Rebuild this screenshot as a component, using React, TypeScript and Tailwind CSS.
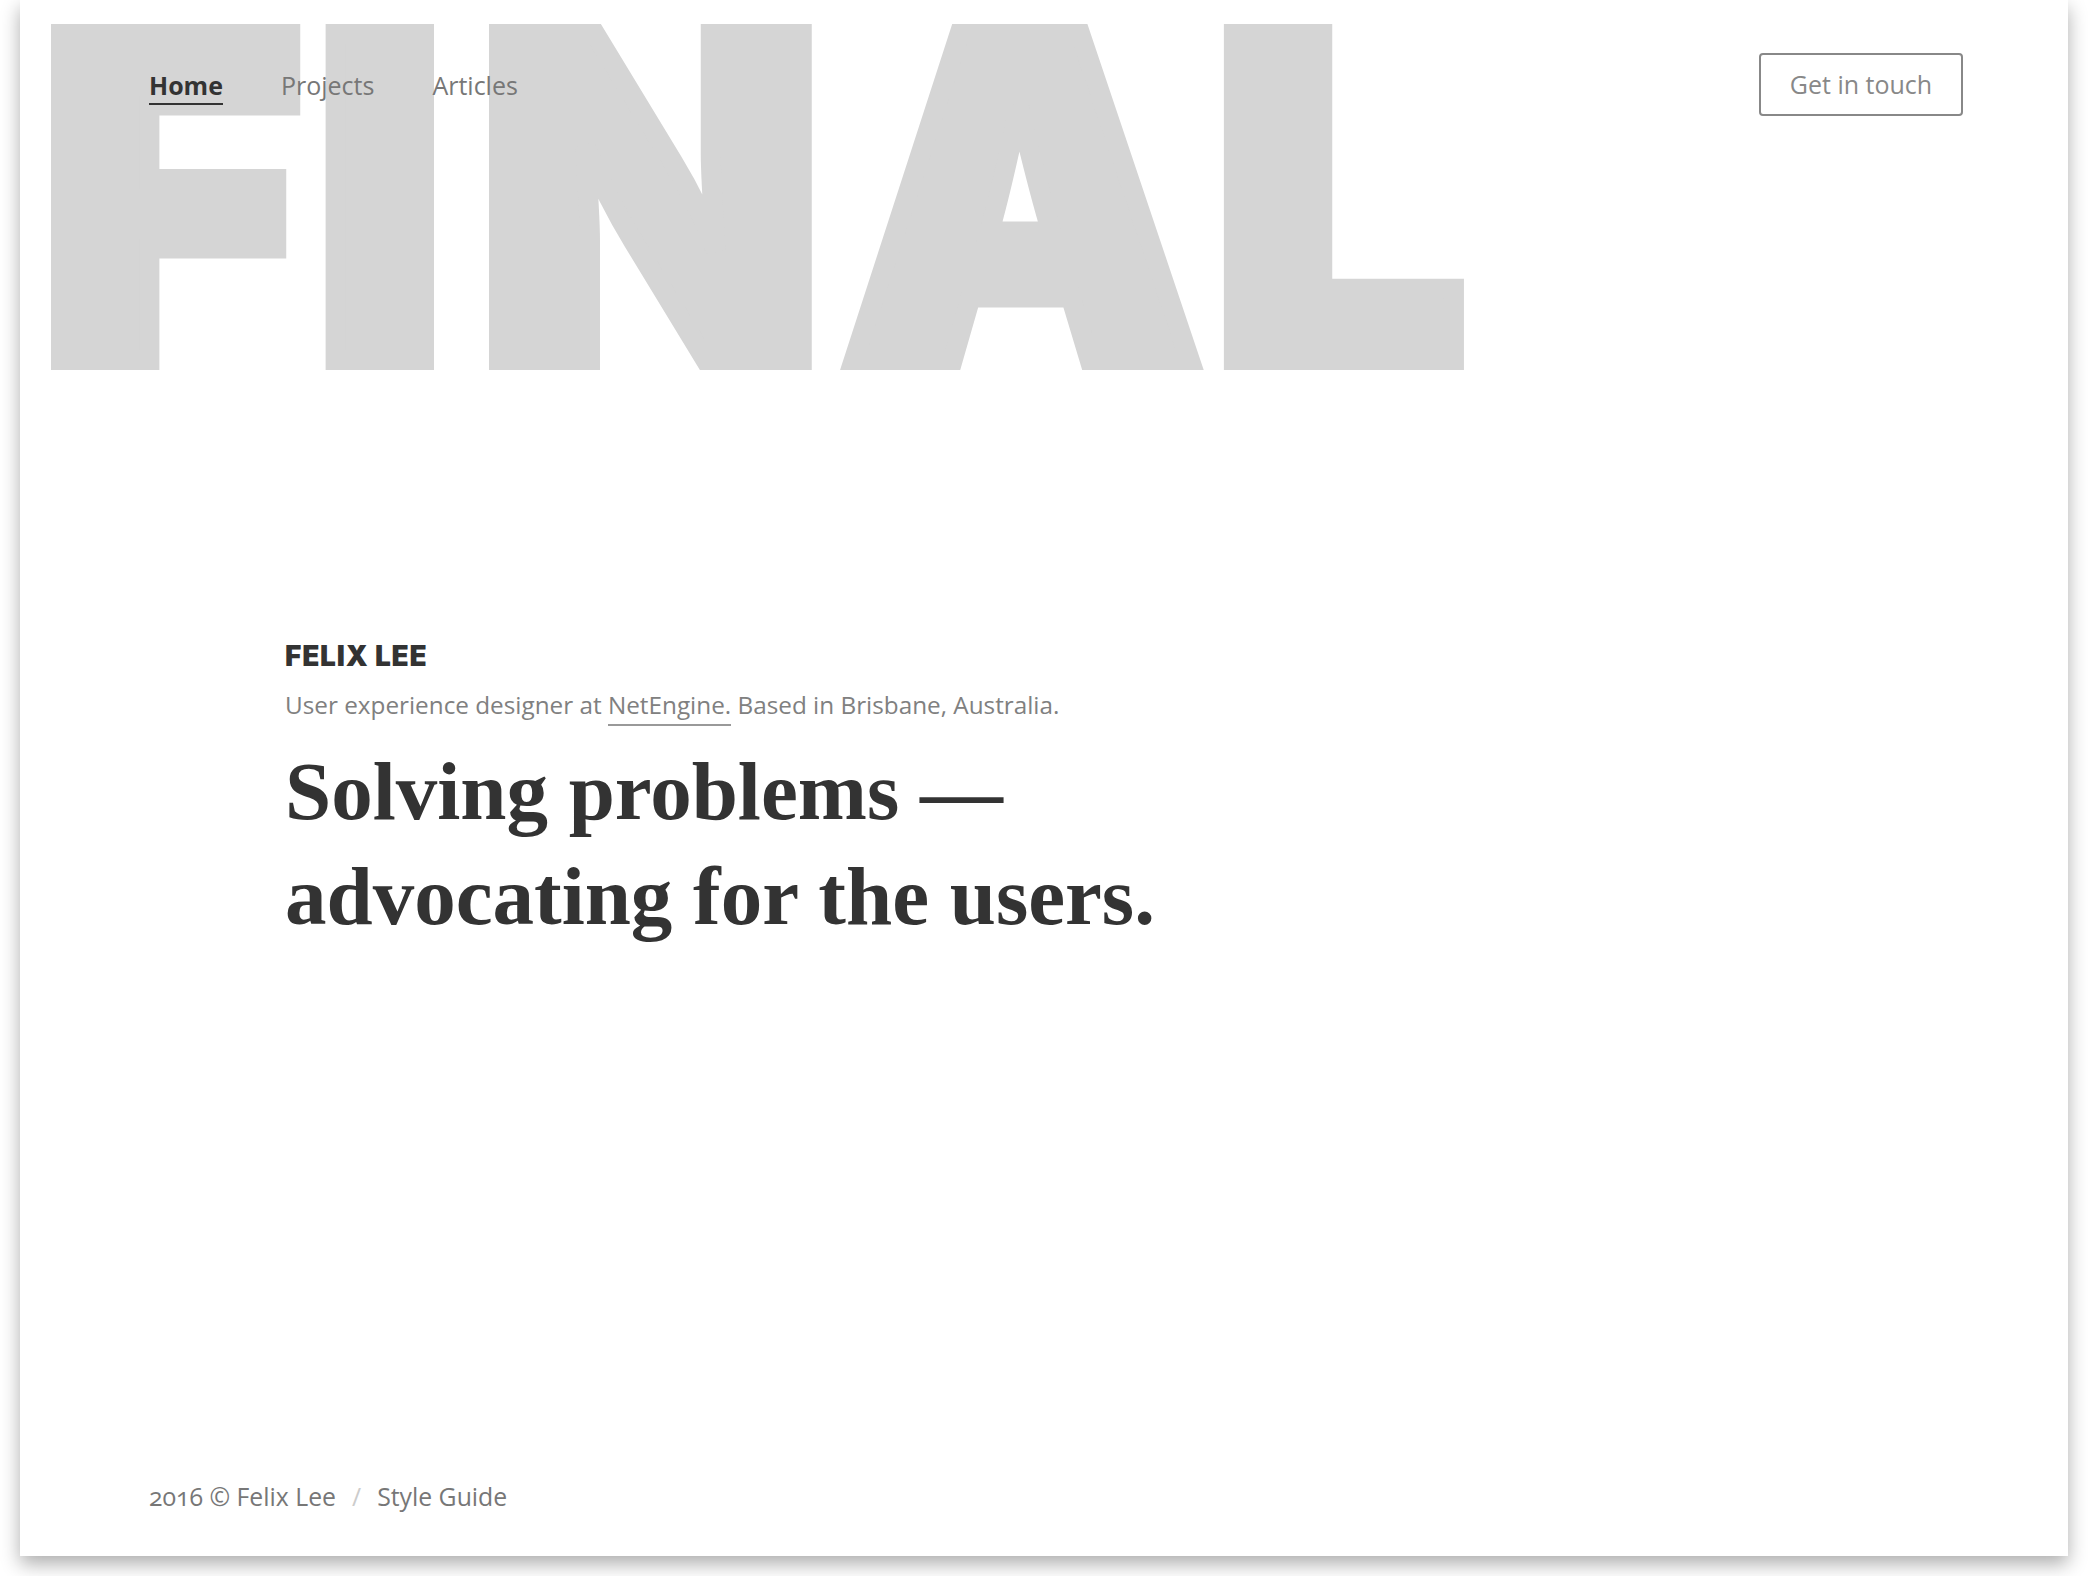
import React from "react";

const sans = "font-['Open_Sans','Noto_Sans',sans-serif]";

export default function App() {
  return (
    <div className="w-[2088px] h-[1576px] bg-white overflow-hidden">
      <div className="relative ml-[20px] w-[2048px] h-[1556px] bg-white shadow-[0_8px_18px_rgba(0,0,0,0.32)] flex flex-col overflow-hidden">
        <div
          aria-hidden="true"
          className="absolute left-[20px] top-[-27px] flex font-['Inter',sans-serif] font-black text-[448px] leading-none text-[#d5d5d5] [-webkit-text-stroke:20px_#d5d5d5] select-none whitespace-nowrap"
        >
          <span>F</span>
          <span className="ml-[13px]">I</span>
          <span className="ml-[33px]">N</span>
          <span className="ml-[21px]">A</span>
          <span className="ml-[13px]">L</span>
        </div>

        <header className="relative z-10 mt-[53px] h-[63px] flex items-center justify-between pl-[129px] pr-[105px]">
          <nav className={`flex items-center gap-[58px] ${sans} text-[25px] leading-[34px]`}>
            <a className="pt-[3px] pb-[1px] border-b-[2px] border-[#333] font-bold text-[#333]">Home</a>
            <a className="pt-[3px] pb-[1px] border-b-[2px] border-transparent text-[#777]">Projects</a>
            <a className="pt-[3px] pb-[1px] border-b-[2px] border-transparent text-[#777]">Articles</a>
          </nav>
          <button className={`w-[204px] h-[63px] rounded-[4px] border-[2px] border-[#888] bg-white ${sans} text-[25px] text-[#888]`}>
            Get in touch
          </button>
        </header>

        <main className="relative z-10 flex-1 pl-[265px] pt-[524px]">
          <div className="font-['Inter',sans-serif] font-black text-[28px] leading-[32px] text-[#333] tracking-[0.8px]">
            FELIX LEE
          </div>
          <p className={`mt-[17px] ${sans} text-[24.3px] leading-[32px] text-[#808080]`}>
            User experience designer at{" "}
            <a className="border-b-[2px] border-[#999] pb-[3px]">NetEngine.</a> Based in Brisbane, Australia.
          </p>
          <h1 className="mt-[18px] font-['Liberation_Serif',serif] font-bold text-[83px] leading-[105px] text-[#333]">
            Solving problems —<br />
            advocating for the users.
          </h1>
        </main>

        <footer className={`relative z-10 pl-[129px] pb-[43px] ${sans} text-[24.8px] leading-[34px] text-[#777] flex items-center`}>
          <span className="[font-feature-settings:'onum']">2016 © Felix Lee</span>
          <span className="mx-[16px] text-[#ccc]">/</span>
          <a>Style Guide</a>
        </footer>
      </div>
    </div>
  );
}
